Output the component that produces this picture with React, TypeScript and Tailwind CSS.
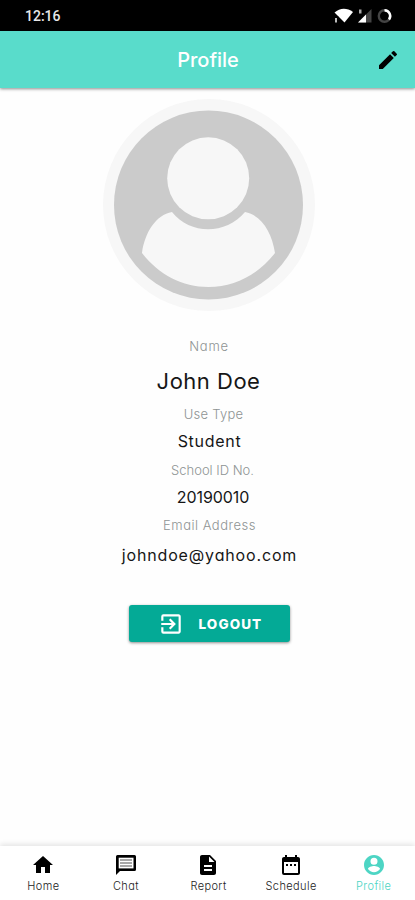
import type { ReactNode } from 'react';
import { MdDateRange, MdDescription, MdEdit, MdExitToApp, MdHome } from 'react-icons/md';

const details = [
  { label: 'Name', value: 'John Doe', row: 'h-[68px]', labelClass: 'pl-[3px] tracking-[0.7px]', valueClass: 'mt-[12px] pl-[2px] text-[22px] leading-7 tracking-[0.5px]' },
  { label: 'Use Type', value: 'Student', row: 'h-[56px]', labelClass: 'pl-[12px] tracking-[0.25px]', valueClass: 'mt-[8px] pl-[4px] text-base leading-5 tracking-[0.7px]' },
  { label: 'School ID No.', value: '20190010', row: 'h-[55px]', labelClass: 'pl-[10px]', valueClass: 'mt-[8px] pl-[11px] text-base leading-5 tracking-[-0.1px]' },
  { label: 'Email Address', value: 'johndoe@yahoo.com', row: 'h-[52px]', labelClass: 'pl-[4px] tracking-[0.5px]', valueClass: 'mt-[11px] pl-[4px] text-base leading-5 tracking-[0.85px]' },
];

type NavItem = { label: string; icon: ReactNode; active?: boolean };

const navItems: NavItem[] = [
  { label: 'Home', icon: <MdHome /> },
  { label: 'Chat', icon: <ChatIcon /> },
  { label: 'Report', icon: <MdDescription /> },
  { label: 'Schedule', icon: <MdDateRange /> },
  { label: 'Profile', icon: <AccountIcon />, active: true },
];

function ChatIcon() {
  return (
    <svg width="24" height="24" viewBox="0 0 24 24" fill="none">
      <path d="M2 22V3.500Q2 2 3.500 2H20.500Q22 2 22 3.500V16.500Q22 18 20.500 18H6Z" fill="currentColor" />
      <path d="M4.700 4.700H19.500V15.400H4.700Z" fill="#fff" />
      <path d="M6 7H18M6 10H18M6 13H18" stroke="#8c8c8c" strokeWidth="1.300" />
    </svg>
  );
}

function AccountIcon() {
  return (
    <svg width="24" height="24" viewBox="0 0 24 24" fill="currentColor">
      <path d="M12 2C6.480 2 2 6.480 2 12s4.480 10 10 10 10-4.480 10-10S17.520 2 12 2zm0 2.700a3.500 3.500 0 1 1 0 7 3.500 3.500 0 0 1 0-7zm0 14.500c-2.500 0-4.710-1.280-6-3.220.03-1.990 4-3.080 6-3.080 1.990 0 5.970 1.090 6 3.080-1.290 1.940-3.500 3.220-6 3.220z" />
    </svg>
  );
}

function StatusIcons() {
  return (
    <svg width="60" height="16" viewBox="0 0 60 16" fill="none">
      <path d="M.5 4.5C6-.5 13-.5 19 4L10.5 14.5Z" fill="#fff" />
      <path d="M0 8.5h4.5V15H0z" fill="#000" />
      <path d="M1 10h2v4.5H1z" fill="#bbb" />
      <path d="M37.5 1v13.5H24Z" fill="#444" />
      <path d="M32 6.5v8h-8Z" fill="#fff" />
      <path d="M25 1.5h2.5v4H25z" fill="#aaa" />
      <circle cx="50.5" cy="8" r="5.7" stroke="#444" strokeWidth="2.4" />
      <path d="M50.5 2.3A5.7 5.7 0 0 1 55 11.5" stroke="#fff" strokeWidth="2.4" />
    </svg>
  );
}

function Avatar() {
  return (
    <svg className="ml-[2px]" width="212" height="212" viewBox="0 0 212 212">
      <circle cx="106" cy="106" r="106" fill="#f7f7f7" />
      <circle cx="105.5" cy="106" r="94.5" fill="#cbcbcb" />
      <circle cx="105.2" cy="79.3" r="41" fill="#f7f7f7" />
      <path
        d="M69 113C53 116 42 133 39 154C55 175 79 188 105.500 188C132 188 156 175 172 154C169 133 158 116 142 113C123 136 87 136 69 113Z"
        fill="#f7f7f7"
      />
    </svg>
  );
}

export default function App() {
  return (
    <div className="flex h-[900px] w-[415px] flex-col overflow-hidden bg-[#fefefe] font-['Inter','Open_Sans',sans-serif] [font-feature-settings:'cv11']">
      <div className="flex h-[31px] shrink-0 items-center justify-between bg-black pr-[21px] pl-[25px]">
        <span className="pt-px font-[Roboto,sans-serif] text-sm font-medium text-[#e8e8e8]">12:16</span>
        <StatusIcons />
      </div>

      <header className="grid h-[57px] shrink-0 grid-cols-[1fr_auto_1fr] items-center bg-[#59dccb] shadow-[0_1px_3px_rgba(0,0,0,0.45)]">
        <h1 className="col-start-2 pl-px text-xl font-medium text-white">Profile</h1>
        <button className="mr-[15px] justify-self-end text-2xl text-black" aria-label="Edit profile">
          <MdEdit />
        </button>
      </header>

      <main className="flex flex-1 flex-col items-center pt-[11px]">
        <Avatar />

        <dl className="mt-[26px] flex flex-col items-center text-center">
          {details.map((item) => (
            <div key={item.label} className={item.row}>
              <dt className={`text-[13px] leading-[18px] font-light text-[#8e9494] ${item.labelClass}`}>{item.label}</dt>
              <dd className={`text-[#161616] ${item.valueClass}`}>{item.value}</dd>
            </div>
          ))}
        </dl>

        <button className="mt-[37px] ml-[3px] flex h-[37px] w-[161px] items-center rounded-[3px] bg-[#04aa96] pl-[29px] text-white shadow-[0_1px_3px_rgba(0,0,0,0.45)]">
          <MdExitToApp className="size-[26px]" />
          <span className="ml-[15px] pt-px text-[13.5px] font-extrabold tracking-[1.1px]">LOGOUT</span>
        </button>
      </main>

      <nav className="grid h-[54px] shrink-0 grid-cols-5 bg-white pt-[7px] pl-[2px] shadow-[0_-2px_5px_rgba(0,0,0,0.1)]">
        {navItems.map((item) => (
          <div key={item.label} className={`flex flex-col items-center ${item.active ? 'text-[#4dd5c4]' : 'text-black'}`}>
            <span className="text-2xl">{item.icon}</span>
            <span className={`mt-[2px] text-[11px] leading-[14px] font-light tracking-[0.4px] ${item.active ? '' : 'text-[#222]'}`}>{item.label}</span>
          </div>
        ))}
      </nav>
    </div>
  );
}
